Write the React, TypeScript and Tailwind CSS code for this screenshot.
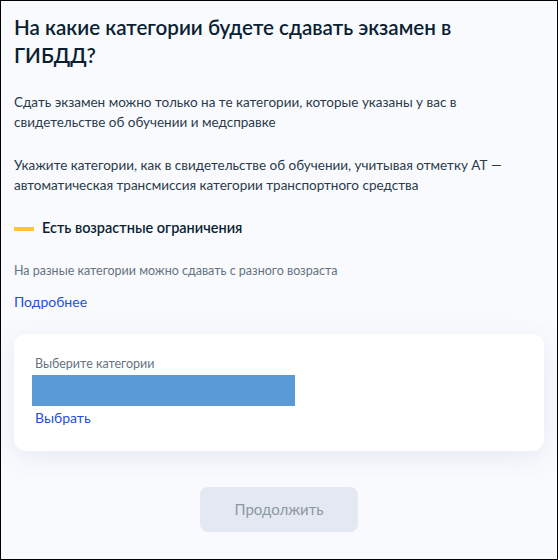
import React from 'react';

export default function App() {
  return (
    <div
      className="w-[558px] h-[560px] border border-black bg-[#f8fafd] px-[13px] pt-[12px] text-[#0b1f33]"
      style={{ fontFamily: 'Lato, "Noto Sans", sans-serif' }}
    >
      <h1 className="max-w-[470px] text-[20.6px] leading-[28px] font-semibold">
        На какие категории будете сдавать экзамен в ГИБДД?
      </h1>

      <p className="mt-[23px] text-[13.5px] leading-[20px] text-[#2b3a4a] pr-[60px]">
        Сдать экзамен можно только на те категории, которые указаны у вас в свидетельстве об обучении и медсправке
      </p>
      <p className="mt-[23px] text-[13.5px] leading-[20px] text-[#2b3a4a]">
        Укажите категории, как в свидетельстве об обучении, учитывая отметку АТ — автоматическая трансмиссия категории транспортного средства
      </p>

      <div className="mt-[23px] flex items-center gap-[8px]">
        <span className="block w-[20px] h-[4px] bg-[#fcc82c] mt-[1px]" />
        <span className="text-[14.5px] leading-[20px] font-semibold text-[#0b1f33]">Есть возрастные ограничения</span>
      </div>

      <p className="mt-[24px] text-[12.5px] leading-[18px] text-[#66727f]">
        На разные категории можно сдавать с разного возраста
      </p>

      <a className="block mt-[12px] text-[14px] leading-[20px] text-[#2350d8]">Подробнее</a>

      <div className="mt-[22px] bg-white rounded-[12px] shadow-[0_6px_24px_rgba(96,120,170,0.12)] pl-[21px] pr-[20px] pt-[22px] pb-[23px]">
        <div className="text-[12.5px] leading-[16px] text-[#66727f]">Выберите категории</div>
        <div className="mt-[3px] -ml-[3px] w-[263px] h-[31px] bg-[#5b9bd5]" />
        <a className="block mt-[2px] text-[14px] leading-[20px] text-[#2350d8]">Выбрать</a>
      </div>

      <div className="mt-[36px] flex justify-center">
        <button className="w-[158px] h-[45px] rounded-[8px] bg-[#e4e8f2] text-[15px] text-[#8c97a4]">
          Продолжить
        </button>
      </div>
    </div>
  );
}
